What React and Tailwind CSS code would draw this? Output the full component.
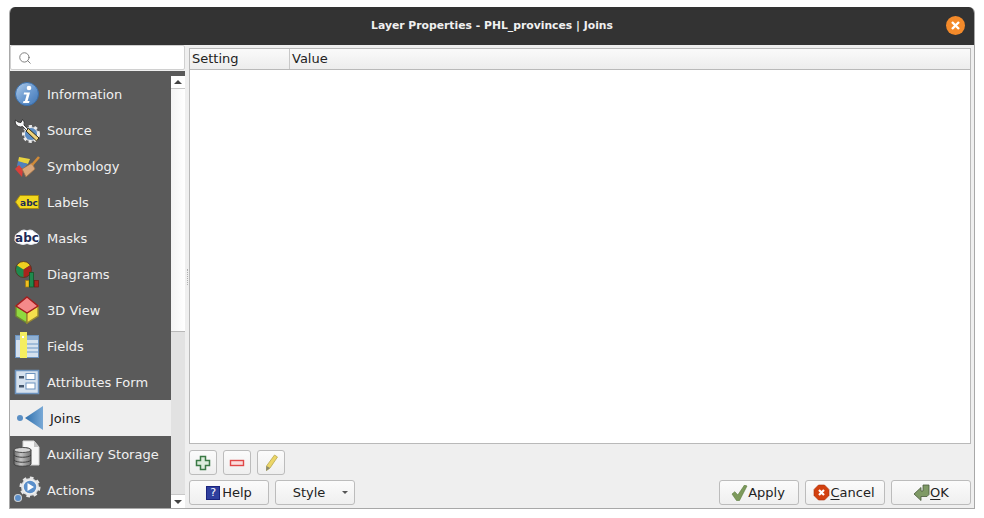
import React from 'react';
import { Search } from 'lucide-react';

const InfoIcon = () => (
  <svg width="26" height="26" viewBox="0 0 26 26">
    <defs>
      <linearGradient id="infoFill" x1="0" y1="0" x2="1" y2="1">
        <stop offset="0" stopColor="#b4cfec" />
        <stop offset="0.5" stopColor="#6d9bd0" />
        <stop offset="1" stopColor="#3f75b5" />
      </linearGradient>
    </defs>
    <circle cx="13" cy="13" r="11.500" fill="url(#infoFill)" stroke="#3a6ea8" />
    <circle cx="15" cy="7" r="2.300" fill="#fff" />
    <path d="M10 11.500h6l-2.400 8.500h2l-.6 2H9l.5-2h1.400l1.800-6.500h-3z" fill="#fff" />
  </svg>
);

const SourceIcon = () => (
  <svg width="26" height="26" viewBox="0 0 26 26">
    <circle cx="17" cy="17" r="7.500" fill="#b9bec4" stroke="#ececec" strokeWidth="3" strokeDasharray="3 2.500" />
    <circle cx="17" cy="17" r="6" fill="#5b8cc4" />
    <path d="M1.500 3a5 5 0 0 0 3 6.500 4.500 4.500 0 0 0 4 0l4 4 1.500-1.500-4-4a5 5 0 0 0-1.500-5.500l-1.500 3-3-.5z" fill="#f6f6f6" stroke="#1f1f1f" strokeWidth="0.8" />
    <path d="M12 14l2.500-2.500 10.500 9.500-2.500 3z" fill="#efd27a" stroke="#2f2a1a" strokeWidth="1" />
  </svg>
);

const SymbologyIcon = () => (
  <svg width="26" height="26" viewBox="0 0 26 26">
    <path d="M5 4l11 2-2 5-10-2z" fill="#e8d33f" />
    <path d="M4 8l10 3-5 5-6-3z" fill="#4f81bd" />
    <path d="M1 16l4-4 4 5-1 7z" fill="#d9403a" />
    <path d="M8 16l10-6 3 6-9 8z" fill="#d9a679" stroke="#9c7048" strokeWidth="0.8" />
    <path d="M18 12l7-8" stroke="#d08a38" strokeWidth="2.600" />
  </svg>
);

const LabelsIcon = () => (
  <svg width="26" height="26" viewBox="0 0 26 26">
    <path d="M1.500 13l4.500-6.500h18.500v13H6z" fill="#f2d81e" stroke="#a88c10" />
    <text x="15" y="16.500" textAnchor="middle" fontSize="9" fontWeight="700" fontFamily="'DejaVu Sans', sans-serif" fill="#1d2a55">abc</text>
  </svg>
);

const MasksIcon = () => (
  <svg width="26" height="26" viewBox="0 0 26 26">
    <path d="M5 7.500q4-4 8-1.500q4-2.500 8 1.500q5 2 4 6q0 5-4 5q-4 2-8 0q-4 2-8 0q-5-1-4-5q-1-4 4-6z" fill="#fff" stroke="#e4e7ee" />
    <text x="13" y="17" textAnchor="middle" fontSize="12" fontWeight="700" fontFamily="'DejaVu Sans', sans-serif" fill="#1d2a55">abc</text>
  </svg>
);

const DiagramsIcon = () => (
  <svg width="26" height="28" viewBox="0 0 26 28">
    <circle cx="9.500" cy="9.500" r="8" fill="#1e8a4e" />
    <path d="M9.500 9.500L2.800 5.200A8 8 0 0 1 16.200 5.200z" fill="#f0d020" />
    <path d="M9.500 9.500L16.200 5.200A8 8 0 0 1 9.500 17.500z" fill="#a8241c" />
    <circle cx="9.500" cy="9.500" r="8" fill="none" stroke="#5a2a1a" strokeWidth="0.8" />
    <rect x="11.500" y="20.500" width="3.500" height="6.500" fill="#f0c020" stroke="#a07a10" strokeWidth="0.7" />
    <rect x="15.500" y="12.500" width="4" height="14.500" fill="#1e8a4e" stroke="#0f5020" strokeWidth="0.7" />
    <rect x="20.500" y="20.500" width="4" height="6.500" fill="#a8241c" stroke="#6b1a12" strokeWidth="0.7" />
  </svg>
);

const View3DIcon = () => (
  <svg width="26" height="28" viewBox="0 0 26 28">
    <path d="M2 10l11 7v10L2 20z" fill="#8fd93f" stroke="#6f8a30" strokeWidth="1.400" />
    <path d="M24 10l-11 7v10l11-7z" fill="#f5df4d" stroke="#9a8a30" strokeWidth="1.400" />
    <path d="M13 1l11 9-11 7-11-7z" fill="#f58a8a" stroke="#a51d1d" strokeWidth="1.400" />
  </svg>
);

const FieldsIcon = () => (
  <svg width="26" height="28" viewBox="0 0 26 28">
    <rect x="1.500" y="3.500" width="23" height="22" fill="#d5e1ee" stroke="#6c93bf" />
    <rect x="2" y="4" width="22" height="4" fill="#8fb0d3" />
    <path d="M10 12h14M10 16h14M10 20h14" stroke="#8fb0d3" strokeWidth="1.500" />
    <rect x="6" y="0" width="7" height="26" fill="#f5ee60" />
    <rect x="8" y="4" width="2" height="2" fill="#fff" />
  </svg>
);

const AttrFormIcon = () => (
  <svg width="26" height="26" viewBox="0 0 26 26">
    <rect x="1.500" y="1.500" width="23" height="23" fill="#d5e1ee" stroke="#6c93bf" strokeWidth="1.500" />
    <rect x="5" y="7" width="5" height="2.500" fill="#44566c" />
    <rect x="12" y="4.500" width="9" height="6" fill="#fff" stroke="#6c93bf" />
    <rect x="5" y="16" width="5" height="2.500" fill="#44566c" />
    <rect x="12" y="14" width="9" height="6" fill="#fff" stroke="#6c93bf" />
  </svg>
);

const JoinsIcon = () => (
  <svg width="32" height="26" viewBox="0 0 32 26">
    <defs>
      <linearGradient id="joinFill" x1="0" y1="0" x2="1" y2="0">
        <stop offset="0" stopColor="#2f70ad" />
        <stop offset="1" stopColor="#79a9d6" />
      </linearGradient>
    </defs>
    <circle cx="9" cy="13" r="3" fill="#5a8fc4" />
    <path d="M14 13L32 1v24z" fill="url(#joinFill)" />
  </svg>
);

const AuxIcon = () => (
  <svg width="28" height="28" viewBox="0 0 28 28">
    <defs>
      <linearGradient id="dbFill" x1="0" y1="0" x2="1" y2="0">
        <stop offset="0" stopColor="#6e6e6e" />
        <stop offset="0.4" stopColor="#c4c4c4" />
        <stop offset="1" stopColor="#6e6e6e" />
      </linearGradient>
    </defs>
    <path d="M10 1h11l5 6v18H10z" fill="#f6f6f6" stroke="#d4d4d4" />
    <path d="M21 1v6h5z" fill="#c4c4c4" />
    <path d="M1 10c0-3 17-3 17 0v14c0 3-17 3-17 0z" fill="url(#dbFill)" stroke="#3f3f3f" />
    <ellipse cx="9.500" cy="10" rx="8.500" ry="2.500" fill="#d4d4d4" stroke="#4f4f4f" />
    <path d="M1 15c2 3 15 3 17 0M1 20c2 3 15 3 17 0" fill="none" stroke="#3f3f3f" />
  </svg>
);

const ActionsIcon = () => (
  <svg width="28" height="30" viewBox="0 0 28 30">
    <circle cx="17" cy="12" r="9" fill="#d3d6d9" stroke="#e6e6e6" strokeWidth="3" strokeDasharray="3.500 3.500" />
    <circle cx="17" cy="12" r="7" fill="#5b8fca" stroke="#f0f0f0" strokeWidth="1.500" />
    <path d="M14.500 8l6.500 4-6.500 4z" fill="#fff" />
    <circle cx="5" cy="23" r="3.500" fill="#5b8fca" stroke="#c9ced3" strokeWidth="1.200" />
  </svg>
);

const navItems = [
  { label: 'Information', icon: <InfoIcon /> },
  { label: 'Source', icon: <SourceIcon /> },
  { label: 'Symbology', icon: <SymbologyIcon /> },
  { label: 'Labels', icon: <LabelsIcon /> },
  { label: 'Masks', icon: <MasksIcon /> },
  { label: 'Diagrams', icon: <DiagramsIcon /> },
  { label: '3D View', icon: <View3DIcon /> },
  { label: 'Fields', icon: <FieldsIcon /> },
  { label: 'Attributes Form', icon: <AttrFormIcon /> },
  { label: 'Joins', icon: <JoinsIcon />, active: true },
  { label: 'Auxiliary Storage', icon: <AuxIcon /> },
  { label: 'Actions', icon: <ActionsIcon /> },
];

// Sidebar row, 36px tall like the Qt list view
const NavRow = ({ label, icon, active }) => (
  <div className={`flex h-9 shrink-0 items-center ${active ? 'bg-[#efefef] text-[#1a1a1a]' : 'text-[#f0f0f0]'}`}>
    <div className="flex w-[34px] shrink-0 justify-center">{icon}</div>
    <span className={`pt-[2px] ${active ? 'pl-[6px]' : 'pl-[3px]'}`}>{label}</span>
  </div>
);

const QtButton = ({ children, className = '' }) => (
  <button className={`flex h-[25px] w-20 items-center justify-center rounded-[3px] border border-[#bcbcbc] bg-gradient-to-b from-[#fbfbfb] to-[#efefef] text-[#222] ${className}`}>
    {children}
  </button>
);

const ToolButton = ({ children }) => (
  <button className="flex h-[25px] w-7 items-center justify-center rounded-[3px] border border-[#bcbcbc] bg-gradient-to-b from-[#fbfbfb] to-[#efefef]">
    {children}
  </button>
);

export default function App() {
  return (
    <div className="h-[518px] w-[984px] overflow-hidden bg-white pl-[9px] pt-[7px] font-['DejaVu_Sans',sans-serif] text-[13px]">
      <div className="flex h-[502px] w-[966px] flex-col overflow-hidden rounded-t-[6px] border-x border-b border-[#a8a8a8] bg-[#efefef]">
        {/* Title bar */}
        <div className="relative flex h-[38px] shrink-0 items-center justify-center bg-[#333333] text-[10.8px] font-bold text-[#f0f0f0]">
          Layer Properties - PHL_provinces | Joins
          <div className="absolute right-[9px] top-[9px] flex h-[19px] w-[19px] items-center justify-center rounded-full bg-[#f48a2a]">
            <svg width="11" height="11" viewBox="0 0 11 11">
              <path d="M2 2l7 7M9 2l-7 7" stroke="#fff" strokeWidth="2.400" />
            </svg>
          </div>
        </div>

        <div className="flex min-h-0 flex-1">
          {/* Left column */}
          <div className="flex w-[175px] shrink-0 flex-col">
            <div className="flex h-[25px] shrink-0 items-center rounded-[2px] border border-[#d0d0d0] bg-white pl-[7px]">
              <Search size={14} color="#707070" strokeWidth={1.5} />
            </div>
            <div className="flex min-h-0 flex-1 overflow-hidden pt-[1px]">
              <div className="flex flex-1 flex-col overflow-hidden bg-[#5a5a5a] pt-[5px]">
                {navItems.map((item) => (
                  <NavRow key={item.label} {...item} />
                ))}
              </div>
              {/* Scrollbar */}
              <div className="flex w-[14px] shrink-0 flex-col bg-[#e2e2e2]">
                <div className="h-[5px] bg-[#5a5a5a]" />
                <div className="flex h-[13px] items-center justify-center border-b border-[#c8c8c8] bg-white">
                  <div className="h-0 w-0 border-x-[4px] border-b-[4px] border-x-transparent border-b-[#444]" />
                </div>
                <div className="h-[243px] border-b border-[#b8b8b8] bg-gradient-to-r from-[#f4f4f4] to-white" />
                <div className="flex-1" />
                <div className="flex h-[14px] items-center justify-center border-t border-[#c8c8c8] bg-white">
                  <div className="h-0 w-0 border-x-[4px] border-t-[4px] border-x-transparent border-t-[#444]" />
                </div>
              </div>
            </div>
          </div>

          {/* Splitter */}
          <div className="flex w-[4px] shrink-0 items-center justify-center">
            <div className="h-[16px] border-l border-dotted border-[#b0b0b0]" />
          </div>

          {/* Right column */}
          <div className="flex min-w-0 flex-1 flex-col pr-[3px] pt-[3px]">
            <div className="flex min-h-0 flex-1 flex-col border border-[#b9b9b9] bg-white">
              <div className="flex h-[21px] shrink-0 border-b border-[#b9b9b9] bg-gradient-to-b from-[#fafafa] to-[#ededed] text-[#222]">
                <div className="w-[100px] border-r border-[#c8c8c8] pl-[2px] leading-[20px]">Setting</div>
                <div className="pl-[2px] leading-[20px]">Value</div>
              </div>
            </div>

            <div className="mt-[6px] flex gap-[6px]">
              <ToolButton>
                <svg width="16" height="16" viewBox="0 0 16 16">
                  <path d="M5.500 1.500h5v4h4v5h-4v4h-5v-4h-4v-5h4z" fill="#dcecdc" stroke="#3b7a45" strokeWidth="1.500" />
                </svg>
              </ToolButton>
              <ToolButton>
                <svg width="16" height="16" viewBox="0 0 16 16">
                  <rect x="1.500" y="5.500" width="13" height="5" fill="#fbdcdc" stroke="#e04848" strokeWidth="1.400" />
                </svg>
              </ToolButton>
              <ToolButton>
                <svg width="16" height="18" viewBox="0 0 16 18">
                  <path d="M11.500 1l3 2-7.500 11-3.500 2.500 0-4.500z" fill="#ecd667" stroke="#b8a850" strokeWidth="0.8" />
                  <path d="M3.500 12l3.500 2-4 3z" fill="#8a8a70" />
                </svg>
              </ToolButton>
            </div>

            <div className="mb-[3px] mt-[5px] flex items-center">
              <QtButton className="gap-[2px]">
                <span className="flex h-[14px] w-[14px] items-center justify-center border border-[#1a237e] bg-[#2f3f9e] text-[11px] leading-none text-white">?</span>
                Help
              </QtButton>
              <QtButton className="relative ml-[6px] pr-[12px]">
                Style
                <span className="absolute right-[6px] top-[10px] h-0 w-0 border-x-[3px] border-t-[3px] border-x-transparent border-t-[#555]" />
              </QtButton>
              <div className="flex-1" />
              <div className="flex gap-[6px]">
                <QtButton className="pr-[2px]">
                  <svg width="17" height="16" viewBox="0 0 17 16">
                    <path d="M1 9l2.800-2.300 3 3.300L13.500 0l2.500 1-7.500 14.500H5.500z" fill="#7d9a5c" stroke="#5b7a3c" strokeWidth="0.6" />
                  </svg>
                  Apply
                </QtButton>
                <QtButton className="pr-[2px]">
                  <svg width="17" height="17" viewBox="0 0 17 17">
                    <path d="M5.500 1h6L16 5.500v6L11.500 16h-6L1 11.500v-6z" fill="#d2400f" stroke="#a8300a" strokeWidth="0.6" />
                    <path d="M6 6l5 5M11 6l-5 5" stroke="#fff" strokeWidth="2.200" />
                  </svg>
                  <span><span className="underline underline-offset-2">C</span>ancel</span>
                </QtButton>
                <QtButton className="border-[#3b7ea8] from-[#f6f9fb] to-[#dfe7ed]">
                  <svg width="17" height="18" viewBox="0 0 17 18">
                    <path d="M16 1H10v6H8V3.500L1 10l7 6.500V12.500h6L16 10.500z" fill="#7f9a66" stroke="#4a5a3c" strokeWidth="0.8" />
                  </svg>
                  <span><span className="underline underline-offset-2">O</span>K</span>
                </QtButton>
              </div>
            </div>
          </div>
        </div>
      </div>
    </div>
  );
}
